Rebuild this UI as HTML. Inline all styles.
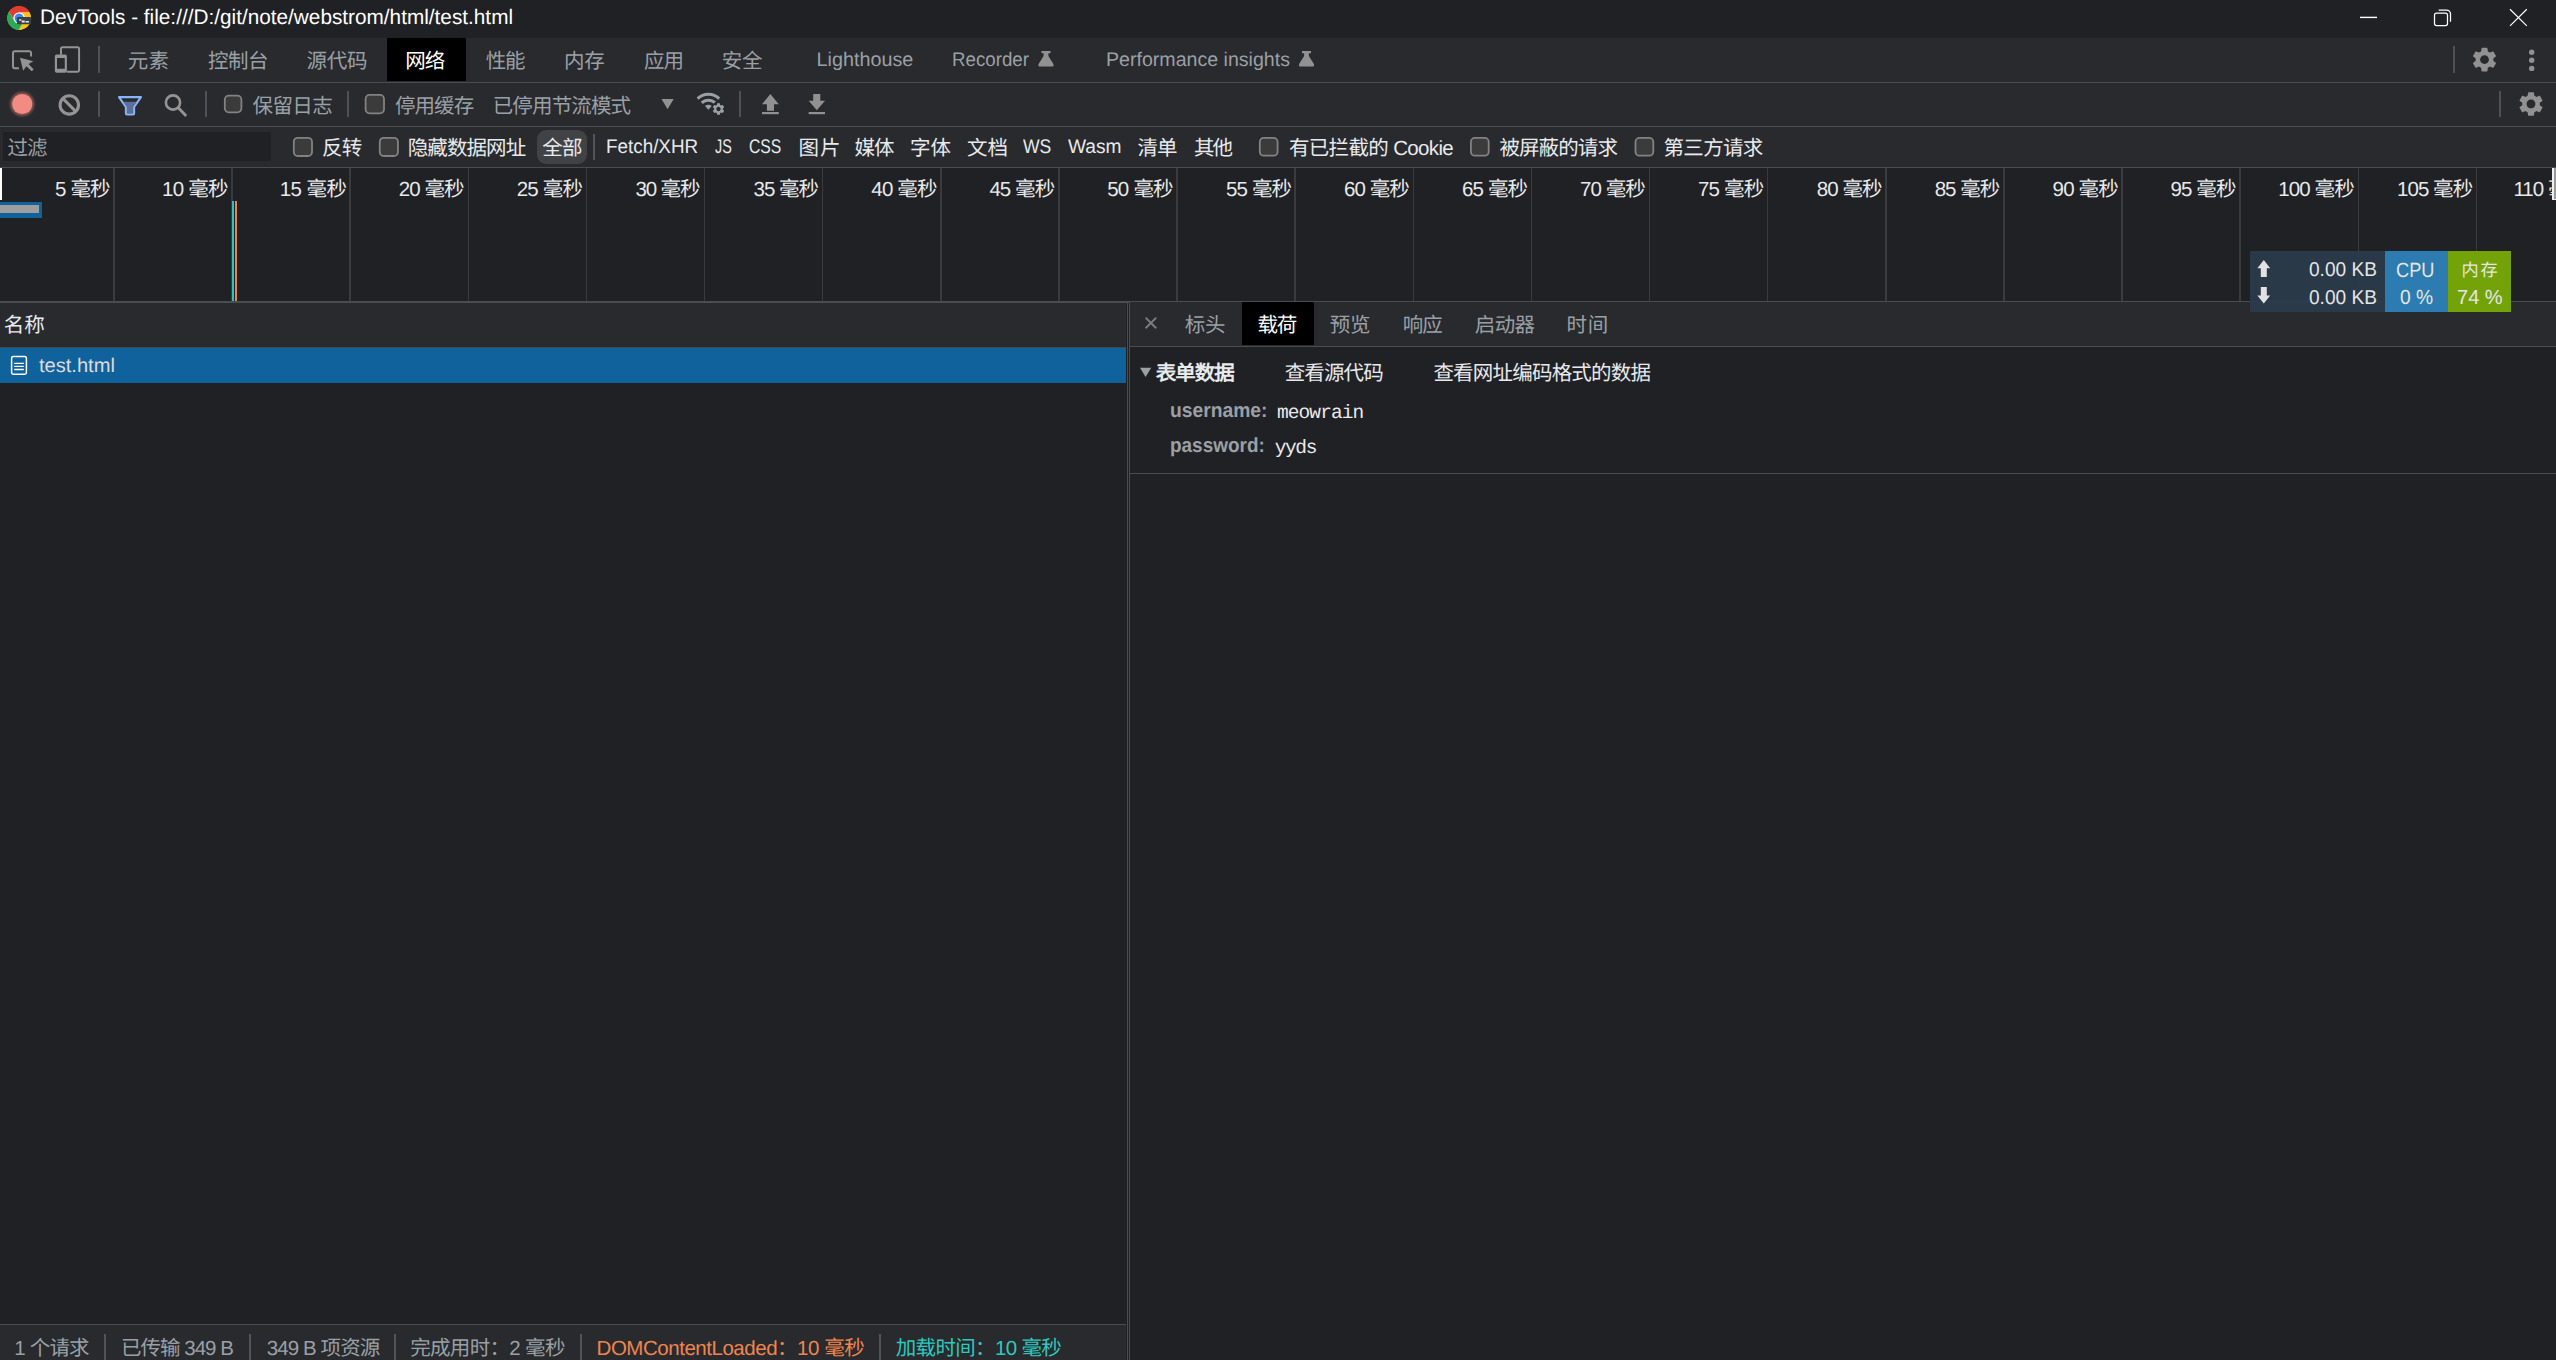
<!DOCTYPE html>
<html lang="zh-CN"><head><meta charset="utf-8"><title>DevTools - Network</title>
<style>
html,body{margin:0;padding:0;background:#202124;}
body{width:2556px;height:1360px;overflow:hidden;text-rendering:geometricPrecision;position:relative;font-family:"Liberation Sans",sans-serif;font-size:19.8px;}
.b{position:absolute;}
.t{position:absolute;white-space:nowrap;transform-origin:0 50%;line-height:28px;height:28px;z-index:1;}
.m{font-family:"Liberation Mono",monospace;}
svg.icons{position:absolute;left:0;top:0;z-index:2;}
</style></head>
<body>
<section class="titlebar">
<div class="b" style="left:0px;top:0px;width:2556px;height:38px;background:#202124;"></div>
<span class="t" id="title" style="left:40.26px;top:3.72px;color:#ffffff;font-size:21.00px;transform:scaleX(0.9886);">DevTools - file:///D:/git/note/webstrom/html/test.html</span>
</section>
<section class="main-tabs">
<div class="b" style="left:0px;top:38px;width:2556px;height:44px;background:#292a2d;"></div>
<div class="b" style="left:0px;top:82px;width:2556px;height:1px;background:#494c50;"></div>
<div class="b" style="left:386.6px;top:38px;width:79px;height:42.8px;background:#000;"></div>
<span class="t" id="tab1" style="left:127.73px;top:47.72px;color:#9aa0a6;font-size:20.50px;letter-spacing:0.180px;">元素</span>
<span class="t" id="tab2" style="left:207.90px;top:47.72px;color:#9aa0a6;font-size:20.50px;letter-spacing:-0.450px;">控制台</span>
<span class="t" id="tab3" style="left:306.62px;top:47.72px;color:#9aa0a6;font-size:20.50px;letter-spacing:-0.354px;">源代码</span>
<span class="t" id="tab4" style="left:405.27px;top:47.72px;color:#ffffff;font-size:20.50px;letter-spacing:-0.900px;">网络</span>
<span class="t" id="tab5" style="left:485.68px;top:47.72px;color:#9aa0a6;font-size:20.50px;letter-spacing:-1.080px;">性能</span>
<span class="t" id="tab6" style="left:563.88px;top:47.72px;color:#9aa0a6;font-size:20.50px;letter-spacing:-0.180px;">内存</span>
<span class="t" id="tab7" style="left:643.90px;top:47.72px;color:#9aa0a6;font-size:20.50px;letter-spacing:-0.900px;">应用</span>
<span class="t" id="tab8" style="left:721.73px;top:47.72px;color:#9aa0a6;font-size:20.50px;letter-spacing:-0.180px;">安全</span>
<span class="t" id="tab9" style="left:816.50px;top:45.74px;color:#9aa0a6;">Lighthouse</span>
<span class="t" id="tab10" style="left:952.00px;top:45.74px;color:#9aa0a6;transform:scaleX(0.9466);">Recorder</span>
<span class="t" id="tab11" style="left:1106.00px;top:45.74px;color:#9aa0a6;transform:scaleX(0.9902);">Performance insights</span>
</section>
<section class="network-toolbar">
<div class="b" style="left:0px;top:83px;width:2556px;height:43px;background:#292a2d;"></div>
<div class="b" style="left:0px;top:126px;width:2556px;height:1px;background:#494c50;"></div>
<span class="t" id="nt1" style="left:252.56px;top:92.88px;color:#9aa0a6;font-size:20.50px;letter-spacing:-0.600px;">保留日志</span>
<span class="t" id="nt2" style="left:394.90px;top:92.88px;color:#9aa0a6;font-size:20.50px;letter-spacing:-0.900px;">停用缓存</span>
<span class="t" id="nt3" style="left:492.74px;top:92.88px;color:#9aa0a6;font-size:20.50px;letter-spacing:-0.864px;">已停用节流模式</span>
</section>
<section class="filter-bar">
<div class="b" style="left:0px;top:127px;width:2556px;height:40px;background:#292a2d;"></div>
<div class="b" style="left:0px;top:167px;width:2556px;height:1px;background:#494c50;"></div>
<div class="b" style="left:3px;top:132px;width:268px;height:29px;background:#202124;"></div>
<div class="b" style="left:537px;top:130px;width:50px;height:34px;background:#414245;border-radius:9px;"></div>
<div class="b" style="left:593px;top:134px;width:2px;height:25.5px;background:#505357;"></div>
<span class="t" id="f0" style="left:7.40px;top:134.82px;color:#9aa0a6;font-size:20.50px;letter-spacing:-0.900px;">过滤</span>
<span class="t" id="f1" style="left:322.00px;top:134.82px;color:#e8eaed;font-size:20.50px;letter-spacing:-0.720px;">反转</span>
<span class="t" id="f2" style="left:407.73px;top:134.82px;color:#e8eaed;font-size:20.50px;letter-spacing:-0.900px;">隐藏数据网址</span>
<span class="t" id="f3" style="left:542.16px;top:134.82px;color:#e8eaed;font-size:20.50px;letter-spacing:-0.540px;">全部</span>
<span class="t" id="f4" style="left:606.00px;top:132.89px;color:#e8eaed;transform:scaleX(0.9527);">Fetch/XHR</span>
<span class="t" id="f5" style="left:714.90px;top:132.89px;color:#e8eaed;transform:scaleX(0.7269);">JS</span>
<span class="t" id="f6" style="left:749.48px;top:132.89px;color:#e8eaed;transform:scaleX(0.7939);">CSS</span>
<span class="t" id="f7" style="left:798.50px;top:134.82px;color:#e8eaed;font-size:20.50px;letter-spacing:0.900px;">图片</span>
<span class="t" id="f8" style="left:854.40px;top:134.82px;color:#e8eaed;font-size:20.50px;letter-spacing:-0.900px;">媒体</span>
<span class="t" id="f9" style="left:910.00px;top:134.82px;color:#e8eaed;font-size:20.50px;">字体</span>
<span class="t" id="f10" style="left:966.90px;top:134.82px;color:#e8eaed;font-size:20.50px;">文档</span>
<span class="t" id="f11" style="left:1022.90px;top:132.89px;color:#e8eaed;transform:scaleX(0.8875);">WS</span>
<span class="t" id="f12" style="left:1067.90px;top:132.89px;color:#e8eaed;transform:scaleX(0.9687);">Wasm</span>
<span class="t" id="f13" style="left:1137.40px;top:134.82px;color:#e8eaed;font-size:20.50px;letter-spacing:-0.900px;">清单</span>
<span class="t" id="f14" style="left:1193.90px;top:134.82px;color:#e8eaed;font-size:20.50px;letter-spacing:-1.800px;">其他</span>
<span class="t" id="f15" style="left:1288.90px;top:134.82px;color:#e8eaed;font-size:20.50px;letter-spacing:-0.655px;">有已拦截的 Cookie</span>
<span class="t" id="f16" style="left:1499.40px;top:134.82px;color:#e8eaed;font-size:20.50px;letter-spacing:-0.900px;">被屏蔽的请求</span>
<span class="t" id="f17" style="left:1663.50px;top:134.82px;color:#e8eaed;font-size:20.50px;letter-spacing:-0.680px;">第三方请求</span>
</section>
<section class="overview">
<div class="b" style="left:0px;top:168px;width:2556px;height:133px;background:#202124;"></div>
<div class="b" style="left:113.15px;top:168px;width:1.5px;height:133px;background:#3a3b3f;"></div>
<div class="b" style="left:231.28px;top:168px;width:1.5px;height:133px;background:#3a3b3f;"></div>
<div class="b" style="left:349.41px;top:168px;width:1.5px;height:133px;background:#3a3b3f;"></div>
<div class="b" style="left:467.54px;top:168px;width:1.5px;height:133px;background:#3a3b3f;"></div>
<div class="b" style="left:585.67px;top:168px;width:1.5px;height:133px;background:#3a3b3f;"></div>
<div class="b" style="left:703.8px;top:168px;width:1.5px;height:133px;background:#3a3b3f;"></div>
<div class="b" style="left:821.93px;top:168px;width:1.5px;height:133px;background:#3a3b3f;"></div>
<div class="b" style="left:940.06px;top:168px;width:1.5px;height:133px;background:#3a3b3f;"></div>
<div class="b" style="left:1058.19px;top:168px;width:1.5px;height:133px;background:#3a3b3f;"></div>
<div class="b" style="left:1176.32px;top:168px;width:1.5px;height:133px;background:#3a3b3f;"></div>
<div class="b" style="left:1294.45px;top:168px;width:1.5px;height:133px;background:#3a3b3f;"></div>
<div class="b" style="left:1412.58px;top:168px;width:1.5px;height:133px;background:#3a3b3f;"></div>
<div class="b" style="left:1530.71px;top:168px;width:1.5px;height:133px;background:#3a3b3f;"></div>
<div class="b" style="left:1648.84px;top:168px;width:1.5px;height:133px;background:#3a3b3f;"></div>
<div class="b" style="left:1766.97px;top:168px;width:1.5px;height:133px;background:#3a3b3f;"></div>
<div class="b" style="left:1885.1px;top:168px;width:1.5px;height:133px;background:#3a3b3f;"></div>
<div class="b" style="left:2003.23px;top:168px;width:1.5px;height:133px;background:#3a3b3f;"></div>
<div class="b" style="left:2121.36px;top:168px;width:1.5px;height:133px;background:#3a3b3f;"></div>
<div class="b" style="left:2239.49px;top:168px;width:1.5px;height:133px;background:#3a3b3f;"></div>
<div class="b" style="left:2357.62px;top:168px;width:1.5px;height:133px;background:#3a3b3f;"></div>
<div class="b" style="left:2475.75px;top:168px;width:1.5px;height:133px;background:#3a3b3f;"></div>
<div class="b" style="left:0px;top:301px;width:1127px;height:2.4px;background:#494c50;"></div>
<div class="b" style="left:1127px;top:301px;width:1429px;height:1.5px;background:#494c50;"></div>
<div class="b" style="left:0px;top:168px;width:1.5px;height:32px;background:#ffffff;"></div>
<div class="b" style="left:2552px;top:168px;width:4px;height:32px;background:#f0f0f0;z-index:3;"></div>
<div class="b" style="left:2553.5px;top:168px;width:2.5px;height:30.5px;background:#9a9a9a;z-index:3;"></div>
<div class="b" style="left:0px;top:202px;width:42px;height:16px;background:#10629d;"></div>
<div class="b" style="left:0px;top:204.5px;width:39px;height:8.5px;background:#9e9e9e;"></div>
<div class="b" style="left:231.5px;top:201px;width:2px;height:100px;background:#3dbdb1;"></div>
<div class="b" style="left:234.5px;top:201px;width:2px;height:100px;background:#e0865a;"></div>
<span class="t" id="ov0" style="left:54.99px;top:176.22px;color:#e8eaed;font-size:20.50px;letter-spacing:-0.840px;">5 毫秒</span>
<span class="t" id="ov1" style="left:161.98px;top:176.22px;color:#e8eaed;font-size:20.50px;letter-spacing:-0.740px;">10 毫秒</span>
<span class="t" id="ov2" style="left:279.84px;top:176.22px;color:#e8eaed;font-size:20.50px;letter-spacing:-0.605px;">15 毫秒</span>
<span class="t" id="ov3" style="left:398.78px;top:176.22px;color:#e8eaed;font-size:20.50px;letter-spacing:-0.920px;">20 毫秒</span>
<span class="t" id="ov4" style="left:516.67px;top:176.22px;color:#e8eaed;font-size:20.50px;letter-spacing:-0.790px;">25 毫秒</span>
<span class="t" id="ov5" style="left:635.43px;top:176.22px;color:#e8eaed;font-size:20.50px;letter-spacing:-1.100px;">30 毫秒</span>
<span class="t" id="ov6" style="left:753.47px;top:176.22px;color:#e8eaed;font-size:20.50px;letter-spacing:-0.965px;">35 毫秒</span>
<span class="t" id="ov7" style="left:871.36px;top:176.22px;color:#e8eaed;font-size:20.50px;letter-spacing:-0.835px;">40 毫秒</span>
<span class="t" id="ov8" style="left:989.40px;top:176.22px;color:#e8eaed;font-size:20.50px;letter-spacing:-0.925px;">45 毫秒</span>
<span class="t" id="ov9" style="left:1107.26px;top:176.22px;color:#e8eaed;font-size:20.50px;letter-spacing:-0.785px;">50 毫秒</span>
<span class="t" id="ov10" style="left:1226.05px;top:176.22px;color:#e8eaed;font-size:20.50px;letter-spacing:-0.880px;">55 毫秒</span>
<span class="t" id="ov11" style="left:1344.09px;top:176.22px;color:#e8eaed;font-size:20.50px;letter-spacing:-0.970px;">60 毫秒</span>
<span class="t" id="ov12" style="left:1461.95px;top:176.22px;color:#e8eaed;font-size:20.50px;letter-spacing:-0.830px;">65 毫秒</span>
<span class="t" id="ov13" style="left:1579.99px;top:176.22px;color:#e8eaed;font-size:20.50px;letter-spacing:-0.925px;">70 毫秒</span>
<span class="t" id="ov14" style="left:1697.88px;top:176.22px;color:#e8eaed;font-size:20.50px;letter-spacing:-0.785px;">75 毫秒</span>
<span class="t" id="ov15" style="left:1816.64px;top:176.22px;color:#e8eaed;font-size:20.50px;letter-spacing:-0.880px;">80 毫秒</span>
<span class="t" id="ov16" style="left:1934.68px;top:176.22px;color:#e8eaed;font-size:20.50px;letter-spacing:-0.965px;">85 毫秒</span>
<span class="t" id="ov17" style="left:2052.57px;top:176.22px;color:#e8eaed;font-size:20.50px;letter-spacing:-0.835px;">90 毫秒</span>
<span class="t" id="ov18" style="left:2170.61px;top:176.22px;color:#e8eaed;font-size:20.50px;letter-spacing:-0.925px;">95 毫秒</span>
<span class="t" id="ov19" style="left:2278.23px;top:176.22px;color:#e8eaed;font-size:20.50px;letter-spacing:-0.884px;">100 毫秒</span>
<span class="t" id="ov20" style="left:2397.02px;top:176.22px;color:#e8eaed;font-size:20.50px;letter-spacing:-0.954px;">105 毫秒</span>
<span class="t" id="ov21" style="left:2513.42px;top:176.22px;color:#e8eaed;font-size:20.50px;letter-spacing:-0.954px;">110 毫秒</span>
</section>
<section class="request-list">
<div class="b" style="left:0px;top:303.3px;width:1126.2px;height:44px;background:#292a2d;"></div>
<div class="b" style="left:0px;top:346.8px;width:1126.2px;height:1px;background:#47484b;"></div>
<div class="b" style="left:0px;top:347.8px;width:1126.2px;height:35.2px;background:#10629d;"></div>
<div class="b" style="left:0px;top:383px;width:1126.2px;height:941px;background:#202124;"></div>
<div class="b" style="left:0px;top:1324px;width:1126.2px;height:1px;background:#494c50;"></div>
<div class="b" style="left:0px;top:1325px;width:1126.2px;height:35px;background:#292a2d;"></div>
<div class="b" style="left:103.95px;top:1334px;width:1.9px;height:26px;background:#505357;"></div>
<div class="b" style="left:249.15px;top:1334px;width:1.9px;height:26px;background:#505357;"></div>
<div class="b" style="left:393.95px;top:1334px;width:1.9px;height:26px;background:#505357;"></div>
<div class="b" style="left:579.75px;top:1334px;width:1.9px;height:26px;background:#505357;"></div>
<div class="b" style="left:879.25px;top:1334px;width:1.9px;height:26px;background:#505357;"></div>
<div class="b" style="left:1126.2px;top:303px;width:4px;height:1057px;background:#202124;"></div>
<div class="b" style="left:1127.2px;top:303.3px;width:1px;height:1057px;background:#494c50;"></div>
<div class="b" style="left:1129.1px;top:302.4px;width:1px;height:1058px;background:#494c50;"></div>
<span class="t" id="h1" style="left:3.66px;top:312.47px;color:#e8eaed;font-size:20.50px;letter-spacing:0.180px;">名称</span>
<span class="t" id="r1" style="left:39.40px;top:352.14px;color:#dcdcdc;transform:scaleX(1.0152);">test.html</span>
<span class="t" id="s1" style="left:14.15px;top:1335.48px;color:#9aa0a6;font-size:20.50px;letter-spacing:-0.787px;">1 个请求</span>
<span class="t" id="s2" style="left:121.01px;top:1335.48px;color:#9aa0a6;font-size:20.50px;letter-spacing:-0.986px;">已传输 349 B</span>
<span class="t" id="s3" style="left:266.70px;top:1335.48px;color:#9aa0a6;font-size:20.50px;letter-spacing:-0.901px;">349 B 项资源</span>
<span class="t" id="s4" style="left:410.20px;top:1335.48px;color:#9aa0a6;font-size:20.50px;letter-spacing:-0.672px;">完成用时：2 毫秒</span>
<span class="t" id="s5" style="left:596.55px;top:1335.48px;color:#ee8550;font-size:20.50px;letter-spacing:-0.470px;">DOMContentLoaded：10 毫秒</span>
<span class="t" id="s6" style="left:895.70px;top:1335.48px;color:#2ec8be;font-size:20.50px;letter-spacing:-0.650px;">加载时间：10 毫秒</span>
</section>
<section class="request-detail">
<div class="b" style="left:1130.1px;top:302.4px;width:1426px;height:43.5px;background:#292a2d;"></div>
<div class="b" style="left:1130.1px;top:345.8px;width:1426px;height:1.5px;background:#494c50;"></div>
<div class="b" style="left:1242px;top:302.2px;width:71.8px;height:42.6px;background:#000;"></div>
<div class="b" style="left:1130.1px;top:347.3px;width:1426px;height:1013px;background:#202124;"></div>
<div class="b" style="left:1130.1px;top:473px;width:1426px;height:1px;background:#494c50;"></div>
<span class="t" id="d1" style="left:1184.66px;top:311.80px;color:#9aa0a6;font-size:20.50px;letter-spacing:-0.180px;">标头</span>
<span class="t" id="d2" style="left:1257.40px;top:311.80px;color:#ffffff;font-size:20.50px;letter-spacing:-1.080px;">载荷</span>
<span class="t" id="d3" style="left:1329.78px;top:311.80px;color:#9aa0a6;font-size:20.50px;letter-spacing:-0.360px;">预览</span>
<span class="t" id="d4" style="left:1402.74px;top:311.80px;color:#9aa0a6;font-size:20.50px;letter-spacing:-1.080px;">响应</span>
<span class="t" id="d5" style="left:1474.78px;top:311.80px;color:#9aa0a6;font-size:20.50px;letter-spacing:-0.630px;">启动器</span>
<span class="t" id="d6" style="left:1566.50px;top:311.80px;color:#9aa0a6;font-size:20.50px;letter-spacing:0.720px;">时间</span>
<span class="t" id="p1" style="left:1155.68px;top:360.00px;color:#e8eaed;font-size:20.50px;font-weight:bold;letter-spacing:-0.960px;">表单数据</span>
<span class="t" id="p2" style="left:1284.67px;top:360.00px;color:#e8eaed;font-size:20.50px;letter-spacing:-0.852px;">查看源代码</span>
<span class="t" id="p3" style="left:1433.40px;top:360.00px;color:#e8eaed;font-size:20.50px;letter-spacing:-0.792px;">查看网址编码格式的数据</span>
<span class="t" id="p4" style="left:1170.49px;top:396.63px;color:#9aa0a6;font-size:20.40px;font-weight:bold;transform:scaleX(0.9456);">username:</span>
<span class="t m" id="p5" style="left:1276.95px;top:398.50px;color:#e8eaed;font-size:19.50px;letter-spacing:-0.900px;">meowrain</span>
<span class="t" id="p6" style="left:1170.49px;top:432.23px;color:#9aa0a6;font-size:20.40px;font-weight:bold;transform:scaleX(0.9293);">password:</span>
<span class="t m" id="p7" style="left:1274.66px;top:434.10px;color:#e8eaed;font-size:19.50px;letter-spacing:-1.350px;">yyds</span>
</section>
<section class="separators">
<div class="b" style="left:98.05px;top:46.2px;width:1.9px;height:26.7px;background:#4e5155;"></div>
<div class="b" style="left:2452.95px;top:46.2px;width:1.9px;height:26.7px;background:#4e5155;"></div>
<div class="b" style="left:98px;top:91.2px;width:1.9px;height:25.6px;background:#4e5155;"></div>
<div class="b" style="left:205.15px;top:91.2px;width:1.9px;height:25.6px;background:#4e5155;"></div>
<div class="b" style="left:347.05px;top:91.2px;width:1.9px;height:25.6px;background:#4e5155;"></div>
<div class="b" style="left:738.85px;top:91.2px;width:1.9px;height:25.6px;background:#4e5155;"></div>
<div class="b" style="left:2498.95px;top:91.2px;width:1.9px;height:25.6px;background:#4e5155;"></div>
</section>
<section class="monitor-widget">
<div class="b" style="left:2250px;top:251px;width:135px;height:61px;background:rgba(42,60,76,0.9);"></div>
<div class="b" style="left:2385px;top:251px;width:63px;height:61px;background:#2d7cb1;"></div>
<div class="b" style="left:2448px;top:251px;width:63px;height:61px;background:#73a309;"></div>
<span class="t" id="w1" style="left:2309.15px;top:255.80px;color:#e6e6e6;font-size:19.90px;transform:scaleX(0.9594);">0.00 KB</span>
<span class="t" id="w2" style="left:2309.15px;top:283.90px;color:#e6e6e6;font-size:19.90px;transform:scaleX(0.9594);">0.00 KB</span>
<span class="t" id="w3" style="left:2396.34px;top:257.06px;color:#e6e6e6;font-size:20.60px;transform:scaleX(0.8829);">CPU</span>
<span class="t" id="w4" style="left:2399.84px;top:284.43px;color:#e6e6e6;font-size:20.40px;transform:scaleX(0.9426);">0 %</span>
<span class="t" id="w5" style="left:2461.58px;top:256.32px;color:#e6e6e6;font-size:17.20px;letter-spacing:1.800px;">内存</span>
<span class="t" id="w6" style="left:2456.56px;top:284.43px;color:#e6e6e6;font-size:20.40px;transform:scaleX(0.9833);">74 %</span>
</section>
<svg class="icons" width="2556" height="1360" viewBox="0 0 2556 1360">
<defs>
<path id="gear" d="M19.14,12.94c0.04-0.3,0.06-0.61,0.06-0.94c0-0.32-0.02-0.64-0.07-0.94l2.03-1.58c0.18-0.14,0.23-0.41,0.12-0.61l-1.92-3.32c-0.12-0.22-0.37-0.29-0.59-0.22l-2.39,0.96c-0.5-0.38-1.03-0.7-1.62-0.94L14.4,2.81c-0.04-0.24-0.24-0.41-0.48-0.41h-3.84c-0.24,0-0.43,0.17-0.47,0.41L9.25,5.35C8.66,5.59,8.12,5.92,7.63,6.29L5.24,5.33c-0.22-0.08-0.47,0-0.59,0.22L2.74,8.87C2.62,9.08,2.66,9.34,2.86,9.48l2.03,1.58C4.84,11.36,4.8,11.69,4.8,12s0.02,0.64,0.07,0.94l-2.03,1.58c-0.18,0.14-0.23,0.41-0.12,0.61l1.92,3.32c0.12,0.22,0.37,0.29,0.59,0.22l2.39-0.96c0.5,0.38,1.03,0.7,1.62,0.94l0.36,2.54c0.05,0.24,0.24,0.41,0.48,0.41h3.84c0.24,0,0.44-0.17,0.47-0.41l0.36-2.54c0.59-0.24,1.13-0.56,1.62-0.94l2.39,0.96c0.22,0.08,0.47,0,0.59-0.22l1.92-3.32c0.12-0.22,0.07-0.47-0.12-0.61L19.14,12.94z M12,15.6c-1.98,0-3.6-1.62-3.6-3.6s1.62-3.6,3.6-3.6s3.6,1.62,3.6,3.6S13.98,15.6,12,15.6z"/>
<path id="flask" d="M-4.5,-8 h9 v2.2 h-2.1 v2.8 L7.4,5 q0.9,2.6 -1.7,2.6 h-11.4 q-2.6,0 -1.7,-2.6 L-2.4,-3 v-2.8 h-2.1 z"/>
</defs>
<!-- chrome logo -->
<g transform="translate(19.1,18)">
  <circle r="11.6" fill="#fff"/>
  <path d="M0.00,-5.60 L10.61,-5.60 A12.0,12.0 0 0 0 -10.16,-6.39 L-4.85,2.80 A5.6,5.6 0 0 1 0.00,-5.60 Z" fill="#e33b2e"/>
  <path d="M4.85,2.80 L-0.46,11.99 A12.0,12.0 0 0 0 10.61,-5.60 L0.00,-5.60 A5.6,5.6 0 0 1 4.85,2.80 Z" fill="#fbc116"/>
  <path d="M-4.85,2.80 L-10.16,-6.39 A12.0,12.0 0 0 0 -0.46,11.99 L4.85,2.80 A5.6,5.6 0 0 1 -4.85,2.80 Z" fill="#2da94f"/>
  <circle r="5.6" fill="#fff"/><circle r="4.5" fill="#3f86f4"/>
  <rect x="-2.2" y="-1" width="14.2" height="7.2" rx="1.2" fill="#3c4043"/>
  <path d="M0,1.2 h2.2 v1.6 h-2.2 z M2.6,2.6 h3 v2 h-3 z M6.4,3 h3.4 v1.6 h-3.4 z" fill="#e8e8e8"/>
</g>
<!-- window controls -->
<g stroke="#fff" stroke-width="1.25" fill="none">
  <path d="M2360,17.4 H2377" stroke-width="1.4"/>
  <rect x="2434.5" y="13.2" width="13" height="12.4" rx="2"/>
  <path d="M2438.6,10 H2446.5 a4,4 0 0 1 4,4 V21.8"/>
  <path d="M2510,9.3 L2526.8,25.9 M2526.8,9.3 L2510,25.9" stroke-width="1.2"/>
</g>
<!-- inspect icon -->
<g>
  <path d="M31.05,56.4 V52.9 a1.7,1.7 0 0 0 -1.7,-1.7 H14.7 a1.7,1.7 0 0 0 -1.7,1.7 V66.6 a1.7,1.7 0 0 0 1.7,1.7 H18.9" fill="none" stroke="#949494" stroke-width="1.95"/>
  <path d="M20,57.85 L33.35,61.2 L28.6,63.9 L33.7,69.4 L31.7,71.2 L26.4,66.2 L23.2,70.8 Z" fill="#949494"/>
</g>
<!-- device icon -->
<g fill="none" stroke="#949494" stroke-width="1.95">
  <path d="M61,54.8 V48.85 a1.6,1.6 0 0 1 1.6,-1.6 H77.5 a1.6,1.6 0 0 1 1.6,1.6 V70.1 a1.6,1.6 0 0 1 -1.6,1.6 H66.8"/>
</g>
<path fill-rule="evenodd" fill="#949494" d="M56.65,54.6 H65.1 a1.8,1.8 0 0 1 1.8,1.8 V70.9 a1.8,1.8 0 0 1 -1.8,1.8 H56.65 a1.8,1.8 0 0 1 -1.8,-1.8 V56.4 a1.8,1.8 0 0 1 1.8,-1.8 Z M57,58.1 V68.8 H64.75 V58.1 Z"/>
<!-- flasks -->
<use href="#flask" x="1046" y="59" fill="#919191"/>
<use href="#flask" x="1306.5" y="59" fill="#919191"/>
<!-- gears / kebab -->
<use href="#gear" transform="translate(2484.5,59.6) scale(1.23) translate(-12,-12)" fill="#919191"/>
<use href="#gear" transform="translate(2531,104) scale(1.23) translate(-12,-12)" fill="#919191"/>
<g fill="#919191"><circle cx="2531.7" cy="52.3" r="2.7"/><circle cx="2531.7" cy="60.3" r="2.7"/><circle cx="2531.7" cy="68.4" r="2.7"/></g>
<!-- checkboxes -->
<g fill="#3b3b3b" stroke="#828282" stroke-width="1.8">
  <rect x="224.80" y="95.70" width="16.60" height="16.60" rx="4"/>
  <rect x="365.60" y="94.90" width="18.40" height="18.40" rx="4"/>
  <rect x="293.80" y="137.80" width="18.20" height="18.20" rx="4"/>
  <rect x="379.75" y="137.80" width="18.20" height="18.20" rx="4"/>
  <rect x="1259.80" y="137.90" width="17.80" height="17.80" rx="4"/>
  <rect x="1470.90" y="137.90" width="17.80" height="17.80" rx="4"/>
  <rect x="1635.50" y="137.90" width="17.80" height="17.80" rx="4"/>
</g>
<!-- record -->
<circle cx="22.2" cy="104" r="13.6" fill="#f28b82" opacity="0.10"/>
<circle cx="22.2" cy="104" r="12.4" fill="#f28b82" opacity="0.16"/>
<circle cx="22.2" cy="104" r="11.3" fill="#f28b82" opacity="0.22"/>
<circle cx="22.2" cy="104" r="10.1" fill="#f28b82"/>
<!-- clear -->
<g fill="none" stroke="#949494" stroke-width="3.1"><circle cx="69.3" cy="104.9" r="9.2"/><path d="M62.9,98.5 L75.7,111.3"/></g>
<!-- filter -->
<path d="M119,97.1 H141 L134.1,106.8 V113.4 a1,1 0 0 1 -1,1 H126.9 a1,1 0 0 1 -1,-1 V106.8 Z" fill="#292a2d" stroke="#8ab4f8" stroke-width="2.1" stroke-linejoin="round"/>
<path d="M123.4,101.7 H136.6 L133.1,106.5 V113.4 H126.9 V106.5 Z" fill="#5b719a"/>
<!-- search -->
<g fill="none" stroke="#949494" stroke-width="2.6"><circle cx="173" cy="102.5" r="7.1"/><path d="M178.3,107.8 L186.2,115.9" stroke-width="2.9"/></g>
<!-- dropdown arrow -->
<path d="M661.5,99 H673.7 L667.6,109.2 Z" fill="#919191"/>
<!-- wifi + gear -->
<g fill="none" stroke="#9aa0a6" stroke-width="2.9">
  <path d="M697.61,98.62 A15.40,15.40 0 0 1 719.19,98.62"/>
  <path d="M701.81,102.90 A9.40,9.40 0 0 1 714.99,102.90"/>
</g>
<path d="M708.40,109.80 L704.97,106.11 A4.90,4.90 0 0 1 711.83,106.11 Z" fill="#9aa0a6"/>
<circle cx="718.5" cy="109" r="7.4" fill="#292a2d"/>
<use href="#gear" transform="translate(718.5,109) scale(0.6) translate(-12,-12)" fill="#9aa0a6"/>
<!-- upload / download -->
<g fill="#919191">
  <path d="M770.4,93.9 L778.8,104.3 H774 V110.7 H766.9 V104.3 H762 Z"/><rect x="762" y="112" width="16.8" height="2.2"/>
  <path d="M813.2,93.9 H820.3 V100.8 H825 L816.8,110.3 L808.7,100.8 H813.2 Z"/><rect x="808.7" y="112" width="16.3" height="2.2"/>
</g>
<!-- document icon -->
<g stroke="#fff" fill="none">
  <rect x="11.6" y="356.6" width="14.8" height="17.6" rx="1.6" stroke-width="1.5"/>
  <path d="M14.2,363.3 H23.8 M14.2,366.4 H23.8 M14.2,369.5 H23.8" stroke-width="1.3"/>
</g>
<!-- close (x) on detail pane -->
<path d="M1145.6,317.6 L1156.2,328.2 M1156.2,317.6 L1145.6,328.2" stroke="#7c7c7c" stroke-width="2" fill="none"/>
<!-- section triangle -->
<path d="M1140,367.8 H1151.2 L1145.6,377 Z" fill="#9aa0a6"/>
<!-- widget arrows -->
<g fill="#e2e2e2">
  <path d="M2263.8,260 L2270.2,268.2 H2266.8 V277 H2260.8 V268.2 H2257.4 Z"/>
  <path d="M2260.8,287 H2266.8 V295.4 H2270.2 L2263.8,303.6 L2257.4,295.4 H2260.8 Z"/>
</g>
</svg>

</body></html>
